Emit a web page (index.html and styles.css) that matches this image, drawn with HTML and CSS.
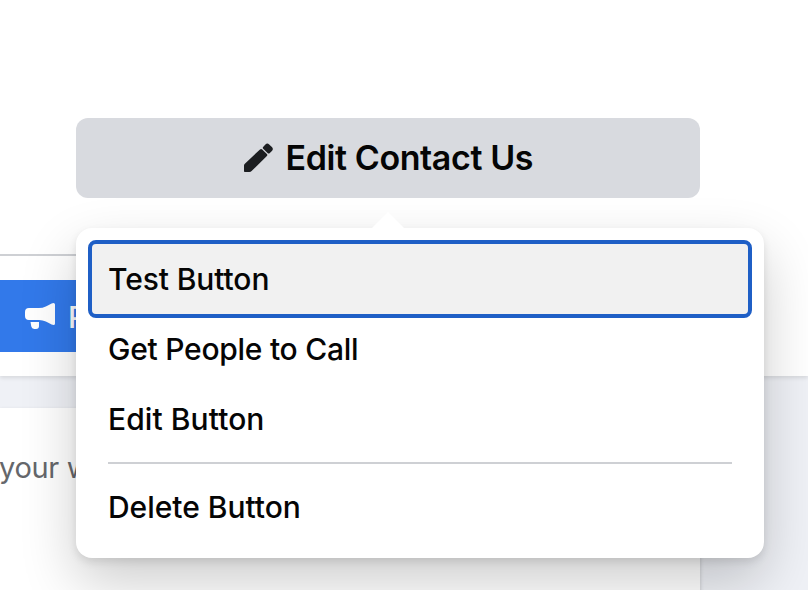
FILE: index.html
```html
<!DOCTYPE html>
<html lang="en">
  <head>
    <meta charset="UTF-8" />
    <meta name="viewport" content="width=device-width, initial-scale=1.0" />
    <title>Edit Contact Us</title>
    <link rel="stylesheet" href="styles.css">
  </head>
  <body>
    <div class="page-header">
      <div class="button-row">
        <div class="contact">
          <button class="contact-button">
            <svg class="pencil" width="30" height="30" viewBox="0 0 30 30">
              <path d="M1 22.4Q1 21.6 1.6 21L17 6.4Q18.2 5.4 19.2 6.4L23.9 11Q24.8 12 23.9 12.9L8.6 28.1Q7.7 29 6.4 29H1.8Q1 29 1 28.2Z" />
              <path d="M20.1 4 22.4 1.5Q24.3-.4 26.2 1.5L28.9 4.1Q30.8 6 28.9 7.9L26.6 10.2Q25.7 11 24.8 10.2L20.2 5.8Q19.3 4.9 20.1 4Z" />
            </svg>
            <span class="contact-label">Edit Contact Us</span>
          </button>
          <div class="menu">
            <div class="menu-item focused"><span class="test-label">Test Button</span></div>
            <div class="menu-item"><span class="get-label">Get People to Call</span></div>
            <div class="menu-item"><span class="edit-label">Edit Button</span></div>
            <div class="menu-divider"></div>
            <div class="menu-item"><span class="delete-label">Delete Button</span></div>
          </div>
        </div>
      </div>
      <div class="actions">
        <button class="promote-button">
          <svg class="megaphone" width="32" height="28" viewBox="0 0 32 28">
            <path d="M5 6H15C20 6 24 3.5 27.6 1.4Q31 .2 31 2.6V21.4Q31 23.8 27.6 22.6C24 20.5 20 18 15 18H5Q1 18 1 14V10Q1 6 5 6Z" />
            <path d="M6.5 20H15V24Q15 27 12 27H10.2Q7.8 27 7.3 24.6Z" />
          </svg>
          <span class="promote-label">Promote</span>
        </button>
      </div>
    </div>
    <div class="card">
      <p>your website</p>
    </div>
  </body>
</html>
```

FILE: styles.css
```css
* {
  box-sizing: border-box;
}

body {
  font-family: Inter, "Liberation Sans", sans-serif;
  background-color: #eff1f6;
  height: 590px;
  margin: 0;
  overflow: hidden;
}

button {
  font-family: inherit;
  border: none;
  display: flex;
  align-items: center;
  cursor: pointer;
}

.page-header {
  height: 376px;
  background-color: #fff;
  box-shadow: 0 2px 4px rgba(0, 0, 0, 0.1);
}

.button-row {
  width: 700px;
  height: 256px;
  padding: 118px 0 0 76px;
  border-bottom: 2px solid #ced0d4;
}

.contact {
  position: relative;
}

.contact-button {
  width: 624px;
  height: 80px;
  justify-content: center;
  gap: 12.5px;
  padding: 0;
  background-color: #d8dadf;
  border-radius: 12px;
  font-size: 34px;
  font-weight: 600;
  color: #050505;
}

.pencil {
  fill: #1c1e21;
}

.contact-label {
  padding-bottom: 2px;
  letter-spacing: -0.4px;
}

.menu {
  position: absolute;
  top: 110px;
  left: 0;
  z-index: 1;
  width: 688px;
  padding: 16px;
  background-color: #fff;
  border-radius: 16px;
  box-shadow: 0 24px 56px rgba(0, 0, 0, 0.2), 0 4px 8px rgba(0, 0, 0, 0.1);
}

/* arrow pointing at the button */
.menu::before {
  content: "";
  position: absolute;
  top: -16px;
  left: 296px;
  width: 32px;
  height: 16px;
  background-color: #fff;
  clip-path: polygon(50% 0, 100% 100%, 0 100%);
}

.menu-item {
  height: 70px;
  padding: 0 16px;
  display: flex;
  align-items: center;
  font-size: 30px;
  font-weight: 500;
  color: #050505;
  border-radius: 4px;
}

.menu-item.focused {
  background-color: #f1f1f1;
  outline: 4px solid #1f5fc6;
}

.test-label {
  letter-spacing: -0.1px;
}

.get-label {
  letter-spacing: -0.26px;
}

.edit-label {
  letter-spacing: 0.08px;
}

.delete-label {
  letter-spacing: -0.03px;
}

.menu-divider {
  height: 2px;
  margin: 8px 16px;
  background-color: #ced0d4;
}

.actions {
  padding-top: 24px;
}

.promote-button {
  width: 240px;
  height: 72px;
  gap: 12px;
  padding: 0 0 0 24px;
  background-color: #3279ea;
  color: #fff;
  font-size: 30px;
  font-weight: 500;
}

.promote-label {
  padding-top: 2px;
}

.megaphone {
  fill: #fff;
}

.card {
  width: 700px;
  height: 200px;
  margin-top: 32px;
  padding-top: 42px;
  background-color: #fff;
  box-shadow: 0 2px 4px rgba(0, 0, 0, 0.2);
}

.card p {
  margin: 0 0 0 -1px;
  font-size: 29px;
  line-height: 36px;
  letter-spacing: -0.3px;
  color: #65676b;
}
```
